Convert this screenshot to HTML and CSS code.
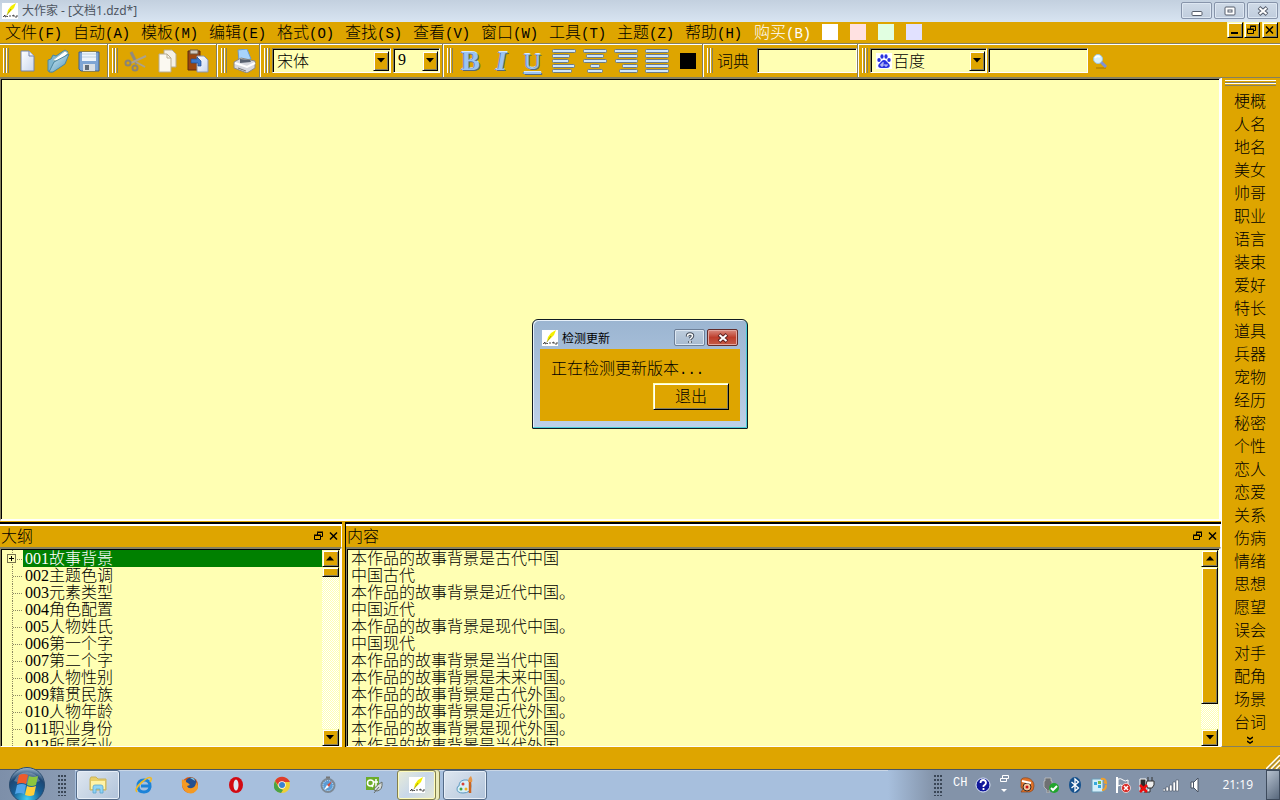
FILE: index.html
```html
<!DOCTYPE html>
<html lang="zh-CN">
<head>
<meta charset="utf-8">
<title>大作家 - [文档1.dzd*]</title>
<link rel="stylesheet" href="styles.css">
</head>
<body>
<svg class="defs" aria-hidden="true">
  <defs>
    <linearGradient id="blue" x1="0" y1="0" x2="0" y2="1"><stop offset="0" stop-color="#e4f2ff"/><stop offset="1" stop-color="#6fa3e0"/></linearGradient>
    <linearGradient id="paper" x1="0" y1="0" x2="1" y2="1"><stop offset="0" stop-color="#fff"/><stop offset="1" stop-color="#c9d6ee"/></linearGradient>
    <linearGradient id="folder" x1="0" y1="0" x2="1" y2="1"><stop offset="0" stop-color="#d9f0f8"/><stop offset="1" stop-color="#4f94b8"/></linearGradient>
    <radialGradient id="orb" cx=".5" cy=".9" r=".9"><stop offset="0" stop-color="#3fd0f5"/><stop offset=".45" stop-color="#175f96"/><stop offset=".75" stop-color="#1d4672"/><stop offset="1" stop-color="#a5bdd3"/></radialGradient>
  </defs>
  <symbol id="pen" viewBox="0 0 16 16"><path fill="#fff" d="M0 0h16v16H0z"/><path fill="#f4ef00" d="M14 0 9 3 6 7 5 11 8 9 12 5z"/><path d="M9 6 5 12" stroke="#8a8600" stroke-width=".7"/><path d="M1 14l2-2v2l2-1 1 1M8 14v-2M10 13l2-1v2M13 14h2v-2" stroke="#222" stroke-width=".8" fill="none"/></symbol>
  <symbol id="bars-left" viewBox="0 0 24 24"><g fill="#cfe6fb" stroke="#6b7c88"><rect x=".5" y=".5" width="23" height="3" rx="1"/><rect x=".5" y="5.500" width="17" height="3" rx="1"/><rect x=".5" y="10.500" width="16" height="3" rx="1"/><rect x=".5" y="15.500" width="22" height="3" rx="1"/><rect x=".5" y="20.500" width="19" height="3" rx="1"/></g></symbol>
  <symbol id="bars-center" viewBox="0 0 24 24"><g fill="#cfe6fb" stroke="#6b7c88"><rect x=".5" y=".5" width="23" height="3" rx="1"/><rect x="3.500" y="5.500" width="17" height="3" rx="1"/><rect x=".5" y="10.500" width="23" height="3" rx="1"/><rect x="7.500" y="15.500" width="9" height="3" rx="1"/><rect x="4.500" y="20.500" width="15" height="3" rx="1"/></g></symbol>
  <symbol id="bars-right" viewBox="0 0 24 24"><g fill="#cfe6fb" stroke="#6b7c88"><rect x=".5" y=".5" width="23" height="3" rx="1"/><rect x="4.500" y="5.500" width="19" height="3" rx="1"/><rect x="1.500" y="10.500" width="22" height="3" rx="1"/><rect x="8.500" y="15.500" width="15" height="3" rx="1"/><rect x="5.500" y="20.500" width="18" height="3" rx="1"/></g></symbol>
  <symbol id="bars-full" viewBox="0 0 24 24"><g fill="#cfe6fb" stroke="#6b7c88"><rect x=".5" y=".5" width="23" height="3" rx="1"/><rect x=".5" y="5.500" width="23" height="3" rx="1"/><rect x=".5" y="10.500" width="23" height="3" rx="1"/><rect x=".5" y="15.500" width="23" height="3" rx="1"/><rect x=".5" y="20.500" width="23" height="3" rx="1"/></g></symbol>
  <symbol id="restore" viewBox="0 0 10 10"><path d="M3.500 4V1.500h5v4H7M3 1h6" fill="none" stroke="currentColor"/><path d="M.5 4.500h6v4h-6zM0 4h7" fill="none" stroke="currentColor"/></symbol>
  <symbol id="cross" viewBox="0 0 10 10"><path d="M1 1.500l7 7M8 1.500l-7 7" stroke="currentColor" stroke-width="1.500"/></symbol>
  <symbol id="up" viewBox="0 0 8 5"><path fill="currentColor" d="M0 4.500h8L4 0z"/></symbol>
  <symbol id="down" viewBox="0 0 8 5"><path fill="currentColor" d="M0 0h8L4 4.500z"/></symbol>
</svg>

<header class="titlebar">
  <svg class="i16"><use href="#pen"/></svg>
  <h1 class="title">大作家 - [文档1.dzd*]</h1>
  <div class="win-buttons">
    <button class="win-btn" aria-label="最小化"><svg width="12" height="12" viewBox="0 0 12 12"><rect x="1" y="6.500" width="10" height="4" rx="1" fill="#fff" stroke="#555d6b"/></svg></button>
    <button class="win-btn" aria-label="还原"><svg width="12" height="12" viewBox="0 0 12 12"><rect x="1" y="2" width="10" height="8" rx="1" fill="#fff" stroke="#555d6b"/><rect x="4" y="5" width="4" height="2" fill="none" stroke="#555d6b"/></svg></button>
    <button class="win-btn" aria-label="关闭"><svg width="12" height="12" viewBox="0 0 12 12"><path d="M2 2.500l8 7M10 2.500l-8 7" stroke="#555d6b" stroke-width="4"/><path d="M2.500 3l7 6M9.500 3l-7 6" stroke="#fff" stroke-width="2"/></svg></button>
  </div>
</header>

<nav class="menubar" aria-label="菜单">
  <button class="menu">文件<span class="key">(F)</span></button>
  <button class="menu">自动<span class="key">(A)</span></button>
  <button class="menu">模板<span class="key">(M)</span></button>
  <button class="menu">编辑<span class="key">(E)</span></button>
  <button class="menu">格式<span class="key">(O)</span></button>
  <button class="menu">查找<span class="key">(S)</span></button>
  <button class="menu">查看<span class="key">(V)</span></button>
  <button class="menu">窗口<span class="key">(W)</span></button>
  <button class="menu">工具<span class="key">(T)</span></button>
  <button class="menu">主题<span class="key">(Z)</span></button>
  <button class="menu">帮助<span class="key">(H)</span></button>
  <button class="menu disabled">购买<span class="key">(B)</span></button>
  <div class="swatches">
    <button class="swatch white" aria-label="白色"></button>
    <button class="swatch pink" aria-label="粉色"></button>
    <button class="swatch green" aria-label="绿色"></button>
    <button class="swatch violet" aria-label="紫色"></button>
  </div>
  <div class="mdi-buttons">
    <button class="raised mdi" aria-label="最小化文档"><svg width="10" height="10"><path d="M1 8h7" stroke="#000" stroke-width="2"/></svg></button>
    <button class="raised mdi" aria-label="还原文档"><svg width="10" height="10"><use href="#restore"/></svg></button>
    <button class="raised mdi mdi-close" aria-label="关闭文档"><svg width="10" height="10"><use href="#cross"/></svg></button>
  </div>
</nav>

<div class="toolbar">
  <div class="group pad">
    <span class="grip"></span>
    <button class="tool" aria-label="新建"><svg class="i24" viewBox="0 0 24 24"><path d="M6 2h8l5 5v15H6z" fill="url(#paper)" stroke="#7483a8"/><path d="M14 2v5h5" fill="#e8eefb" stroke="#7483a8"/></svg></button>
    <button class="tool" aria-label="打开"><svg class="i24" viewBox="0 0 24 24"><path d="M2 11l3-1 2-4 3 1 9-6 3 2-4 11-12 9-4-1z" fill="#7fb6cf" stroke="#4b86a0"/><path d="M7 11 19 2l3 2-9 9z" fill="#fff" stroke="#9bb"/><path d="M3 23 8 13l15-8-4 10-12 8z" fill="url(#folder)" stroke="#4b86a0"/></svg></button>
    <button class="tool" aria-label="保存"><svg class="i24" viewBox="0 0 24 24"><path d="M2 3h20v19H4l-2-2z" fill="#7ea5d4" stroke="#40618f"/><path d="M5 3h14v9H5z" fill="#eef5fb"/><path d="M5 5h14M5 8h14" stroke="#bdd0e0"/><path d="M6 15h12v7H6z" fill="#d9dfe5"/><path d="M8 16h4v5H8z" fill="#606b77"/></svg></button>
  </div>
  <div class="group pad">
    <span class="grip"></span>
    <button class="tool" aria-label="剪切"><svg class="i24" viewBox="0 0 24 24"><path d="M7 3l6 12" stroke="#918a7c" stroke-width="3"/><path d="M22 7 7 14" stroke="#aaa28d" stroke-width="2"/><path d="M12 13l9 5" stroke="#aaa28d" stroke-width="2"/><circle cx="4" cy="14" r="2.500" fill="none" stroke="#898477" stroke-width="2"/><circle cx="11" cy="19" r="2.500" fill="none" stroke="#898477" stroke-width="2"/></svg></button>
    <button class="tool" aria-label="复制"><svg class="i24" viewBox="0 0 24 24"><path d="M9 1h8l4 4v13H9z" fill="#f4f0e6" stroke="#b7ac91"/><path d="M4 5h8l4 4v14H4z" fill="#fbf9f1" stroke="#b7ac91"/><path d="M12 5v4h4" fill="none" stroke="#b7ac91"/></svg></button>
    <button class="tool" aria-label="粘贴"><svg class="i24" viewBox="0 0 24 24"><path d="M2 2h12v19H2z" fill="#9b450f" stroke="#5d2b10"/><path d="M4 1h8v4H4z" fill="#d0c8be" stroke="#6c563f"/><path d="M11 7h7l4 4v12H11z" fill="url(#paper)" stroke="#8b94a8"/><path d="M5 10h6V8l4 4v5h-3v-3H5z" fill="#3d78cb" stroke="#214b91" stroke-width=".7"/></svg></button>
  </div>
  <div class="group">
    <span class="grip"></span>
    <button class="tool" aria-label="打印"><svg class="i24" viewBox="0 0 24 24"><path d="M5 1l9-1 4 10-12 2z" fill="#a8d3fc" stroke="#6a9ace"/><path d="M1 13l7-4 14 3v7l-8 5-13-5z" fill="#d7d9df" stroke="#8b8883"/><path d="M7 10l10 1 1 2-11 1z" fill="#596270"/><path d="M2 14l12 4 8-4" fill="none" stroke="#fff" stroke-width="2"/><path d="M5 19l8 3" stroke="#777"/></svg></button>
  </div>
  <div class="group">
    <span class="grip"></span>
    <div class="combo font-combo"><select aria-label="字体"><option>宋体</option></select><span class="raised arrow"><svg width="8" height="5"><use href="#down"/></svg></span></div>
    <div class="combo size-combo"><select class="digits" aria-label="字号"><option>9</option></select><span class="raised arrow"><svg width="8" height="5"><use href="#down"/></svg></span></div>
  </div>
  <div class="group">
    <span class="grip"></span>
    <button class="tool letter bold" aria-label="加粗">B</button>
    <button class="tool letter italic" aria-label="斜体">I</button>
    <button class="tool letter underline" aria-label="下划线">U</button>
    <button class="tool" aria-label="左对齐"><svg class="i24"><use href="#bars-left"/></svg></button>
    <button class="tool" aria-label="居中"><svg class="i24"><use href="#bars-center"/></svg></button>
    <button class="tool" aria-label="右对齐"><svg class="i24"><use href="#bars-right"/></svg></button>
    <button class="tool" aria-label="两端对齐"><svg class="i24"><use href="#bars-full"/></svg></button>
    <button class="tool" aria-label="文字颜色"><span class="color-box"></span></button>
  </div>
  <div class="group">
    <span class="grip"></span>
    <label class="dict-label" for="dict">词典</label>
    <input class="field" id="dict" type="text">
  </div>
  <div class="group last">
    <span class="grip"></span>
    <div class="combo engine-combo">
      <svg class="i16" viewBox="0 0 16 16"><path fill="#fff" d="M0 0h16v16H0z"/><g fill="#2932df"><ellipse cx="3" cy="7" rx="1.700" ry="2"/><ellipse cx="6" cy="3.500" rx="1.600" ry="2.200"/><ellipse cx="10" cy="3.500" rx="1.600" ry="2.200"/><ellipse cx="13" cy="7" rx="1.700" ry="2"/><path d="M8 7c2 0 3 2 4 3 3 2 2 5-1 5H5c-3 0-4-3-1-5 1-1 2-3 4-3z"/></g><path d="M7 9v4H5v-2h2M9 11v2h2v-2" fill="none" stroke="#fff" stroke-width=".8"/></svg>
      <select aria-label="搜索引擎"><option>百度</option></select><span class="raised arrow"><svg width="8" height="5"><use href="#down"/></svg></span>
    </div>
    <input class="field" type="text" aria-label="搜索内容">
    <button class="search" aria-label="搜索"><svg class="i16" viewBox="0 0 16 16"><path d="M4 15h10" stroke="#b78600" stroke-width="1.500"/><path d="M9 9l5 5" stroke="#7f91d6" stroke-width="3"/><circle cx="6" cy="6" r="4.500" fill="#d5f0ff" stroke="#9cc7e0"/><path d="M3 5q2-3 5-1" stroke="#fff" stroke-width="2" fill="none"/></svg></button>
  </div>
</div>

<main class="workspace">
  <div class="documents">
    <textarea class="editor" aria-label="正文"></textarea>
    <div class="panels">
      <section class="panel outline">
        <header class="panel-head"><h2>大纲</h2><button aria-label="浮动大纲"><svg width="10" height="10"><use href="#restore"/></svg></button><button aria-label="关闭大纲"><svg width="10" height="10"><use href="#cross"/></svg></button></header>
        <div class="panel-body">
          <ul class="tree">
            <li class="selected"><span class="branch"><span class="plus"></span></span><span class="row-text"><span class="digits">001</span>故事背景</span></li>
            <li><span class="branch"></span><span class="row-text"><span class="digits">002</span>主题色调</span></li>
            <li><span class="branch"></span><span class="row-text"><span class="digits">003</span>元素类型</span></li>
            <li><span class="branch"></span><span class="row-text"><span class="digits">004</span>角色配置</span></li>
            <li><span class="branch"></span><span class="row-text"><span class="digits">005</span>人物姓氏</span></li>
            <li><span class="branch"></span><span class="row-text"><span class="digits">006</span>第一个字</span></li>
            <li><span class="branch"></span><span class="row-text"><span class="digits">007</span>第二个字</span></li>
            <li><span class="branch"></span><span class="row-text"><span class="digits">008</span>人物性别</span></li>
            <li><span class="branch"></span><span class="row-text"><span class="digits">009</span>籍贯民族</span></li>
            <li><span class="branch"></span><span class="row-text"><span class="digits">010</span>人物年龄</span></li>
            <li><span class="branch"></span><span class="row-text"><span class="digits">011</span>职业身份</span></li>
            <li><span class="branch"></span><span class="row-text"><span class="digits">012</span>所属行业</span></li>
          </ul>
          <div class="scroll"><button class="raised sbtn" aria-label="大纲上滚"><svg width="8" height="5"><use href="#up"/></svg></button><span class="raised thumb short"></span><button class="raised sbtn end" aria-label="大纲下滚"><svg width="8" height="5"><use href="#down"/></svg></button></div>
        </div>
      </section>
      <section class="panel content">
        <header class="panel-head"><h2>内容</h2><button aria-label="浮动内容"><svg width="10" height="10"><use href="#restore"/></svg></button><button aria-label="关闭内容"><svg width="10" height="10"><use href="#cross"/></svg></button></header>
        <div class="panel-body">
          <ul class="lines">
            <li>本作品的故事背景是古代中国</li>
            <li>中国古代</li>
            <li>本作品的故事背景是近代中国。</li>
            <li>中国近代</li>
            <li>本作品的故事背景是现代中国。</li>
            <li>中国现代</li>
            <li>本作品的故事背景是当代中国</li>
            <li>本作品的故事背景是未来中国。</li>
            <li>本作品的故事背景是古代外国。</li>
            <li>本作品的故事背景是近代外国。</li>
            <li>本作品的故事背景是现代外国。</li>
            <li>本作品的故事背景是当代外国</li>
          </ul>
          <div class="scroll"><button class="raised sbtn" aria-label="内容上滚"><svg width="8" height="5"><use href="#up"/></svg></button><span class="raised thumb long"></span><button class="raised sbtn end" aria-label="内容下滚"><svg width="8" height="5"><use href="#down"/></svg></button></div>
        </div>
      </section>
    </div>
  </div>
  <aside class="sidebar">
    <span class="hgrip"></span>
    <button>梗概</button><button>人名</button><button>地名</button><button>美女</button><button>帅哥</button><button>职业</button><button>语言</button><button>装束</button><button>爱好</button><button>特长</button><button>道具</button><button>兵器</button><button>宠物</button><button>经历</button><button>秘密</button><button>个性</button><button>恋人</button><button>恋爱</button><button>关系</button><button>伤病</button><button>情绪</button><button>思想</button><button>愿望</button><button>误会</button><button>对手</button><button>配角</button><button>场景</button><button>台词</button>
    <button class="more" aria-label="更多"><svg width="6" height="9" viewBox="0 0 6 9"><path d="M0 1l3 2 3-2M0 5l3 2 3-2" fill="none" stroke="#000" stroke-width="1.500"/></svg></button>
  </aside>
</main>

<div class="statusbar"><svg width="14" height="14" viewBox="0 0 14 14"><path d="M0 14 14 0M5 14l9-9M10 14l4-4" stroke="#fff" stroke-width="1.500"/><path d="M2 14 14 2M7 14l7-7M12 14l2-2" stroke="#85806c"/></svg></div>

<footer class="taskbar">
  <div class="start-zone">
    <button class="start" aria-label="开始"><svg width="38" height="38" viewBox="0 0 38 38"><circle cx="19" cy="19" r="17.500" fill="url(#orb)" stroke="#294c70"/><path d="M6 15a14 14 0 0 1 26 0q-13 5-26 0z" fill="#fff" opacity=".25"/><path d="M11 9q5-2 9 0l-2 9q-4-2-9 0z" fill="#ee5b2c"/><path d="M21 10q4 2 9 0l-2 9q-4 2-9 0z" fill="#8dc63f"/><path d="M9 19q5-2 9 0l-2 9q-4-2-9 0z" fill="#51a5ea"/><path d="M19 20q4 2 9 0l-2 9q-4 2-9 0z" fill="#ffcf3a"/></svg></button>
    <span class="dots"></span>
  </div>
  <div class="apps">
    <button class="app open" aria-label="资源管理器"><svg class="i18" viewBox="0 0 18 18"><path d="M1 3l1-2h5l2 2h8v11H1z" fill="#e9cf68" stroke="#c9b35e"/><path d="M2 5h14v8H2z" fill="#fff3a8"/><path d="M4 17v-6q0-2 2-2h6q2 0 2 2v6h-3v-4H7v4z" fill="#8fd4f5" stroke="#5aa6cf" stroke-width=".8"/></svg></button>
    <button class="app" aria-label="Internet Explorer"><svg class="i18" viewBox="0 0 18 18"><path d="M15 11q-1 5-6 5-6 0-6-6t6-6q6 0 6 6H6" fill="none" stroke="#1c83d8" stroke-width="3"/><path d="M2 16Q-1 13 7 6q7-6 9-4 1 1-1 4" fill="none" stroke="#efba28" stroke-width="1.700"/></svg></button>
    <button class="app" aria-label="Firefox"><svg class="i18" viewBox="0 0 18 18"><circle cx="9" cy="9" r="8" fill="#d95b10"/><circle cx="10" cy="7" r="5.500" fill="#254f8f"/><path d="M1 3q1 2 4 1-1 2 2 3l2 2-3 1q1 3 5 2 4-1 4-6 4 6 0 9-5 5-11 0-4-4-3-12z" fill="#f49a23"/><path d="M9 2q4-1 5 3-3-2-5-3z" fill="#84c9e4"/></svg></button>
    <button class="app" aria-label="Opera"><svg class="i18" viewBox="0 0 18 18"><ellipse cx="9" cy="9" rx="7" ry="8" fill="#d20a13"/><ellipse cx="9" cy="9" rx="2.500" ry="5.500" fill="#dce7f4"/></svg></button>
    <button class="app" aria-label="Chrome"><svg class="i18" viewBox="0 0 18 18"><circle cx="9" cy="9" r="8" fill="#efcf35"/><path d="M2 5q3-5 9-4 4 1 6 5H9L6 10z" fill="#df3d2c"/><path d="M2 5l4 7 4 2-2 3Q0 16 1 8z" fill="#4ba344"/><circle cx="9" cy="9" r="3.700" fill="#fff"/><circle cx="9" cy="9" r="3" fill="#3c83d1"/></svg></button>
    <button class="app" aria-label="Safari"><svg class="i18" viewBox="0 0 18 18"><circle cx="9" cy="9.500" r="6.500" fill="#5b9cd6" stroke="#7d8995" stroke-width="2"/><circle cx="9" cy="9.500" r="5" fill="none" stroke="#d3e6f5" stroke-dasharray="1 1"/><path d="M13 5l-3 6-2-2z" fill="#e04a36"/><path d="M5 14l3-5 2 2z" fill="#fff"/><path d="M7 1.500h4" stroke="#777" stroke-width="2"/></svg></button>
    <button class="app" aria-label="Qt"><svg class="i18" viewBox="0 0 18 18"><path fill="#6dad28" d="M1 1h13v13H1z"/><circle cx="5.500" cy="7" r="3" fill="none" stroke="#fff" stroke-width="1.500"/><path d="M6 9l2 2M11 3v7h2M9 6h4" stroke="#fff" stroke-width="1.500" fill="none"/><path d="M17 6q1 8-5 9l-3-1q0-3 8-8z" fill="#d6dcda" stroke="#69706b"/><path d="M9 17l5-6" stroke="#69706b"/></svg></button>
    <button class="app active" aria-label="大作家"><svg class="i16"><use href="#pen"/></svg></button>
    <button class="app open" aria-label="画图"><svg class="i18" viewBox="0 0 18 18"><path d="M8 4q7-1 7 6 0 7-8 7-6 0-6-4 0-3 2-3 0-5 5-6z" fill="#d9effa" stroke="#5e9ac0"/><circle cx="5" cy="13" r="1.500" fill="#45a441"/><circle cx="7" cy="8" r="1.500" fill="#d64237"/><circle cx="10" cy="13" r="1.500" fill="#efb62b"/><path d="M14 6v11" stroke="#cd6420" stroke-width="2.500"/><path d="M12 6q0-4 3-6 2 4 1 6z" fill="#e69749"/></svg></button>
  </div>
  <div class="tray">
    <span class="dots"></span>
    <span class="ime">CH</span>
    <svg class="i16" viewBox="0 0 16 16"><circle cx="8" cy="8" r="7" fill="#10179b" stroke="#dbe6f6"/><path d="M5.500 6q0-3 2.700-3T11 6q0 1-2.500 3v1M8.500 11v2" fill="none" stroke="#fff" stroke-width="1.800"/></svg>
    <svg class="i16 lang-bar" viewBox="0 0 16 24"><path d="M7.500 5V2.500h6v3H11M5.500 5.500h6v3h-6z" fill="none" stroke="#fff"/><path d="M6 16h6l-3 3z" fill="#fff"/></svg>
    <svg class="i16" viewBox="0 0 16 16"><path d="M2 3q1-3 7-2 6 2 6 8 0 5-4 6H2l2-3q-3-1-2-4z" fill="#e07127" stroke="#7c3a16" stroke-width=".6"/><circle cx="8" cy="10" r="4" fill="#f1c69c" stroke="#3c2a20"/><circle cx="8" cy="10" r="1.500" fill="#c11"/><path d="M3 4l9 2" stroke="#fff" stroke-width="2"/></svg>
    <svg class="i16" viewBox="0 0 16 16"><path d="M2 1h6v3h1v6l-3 3v3H4v-3l-3-3V4h1z" fill="#6e7072" stroke="#ccc" stroke-width=".7"/><circle cx="11" cy="11" r="5" fill="#22a52d"/><path d="M8 11l2 2 4-4" fill="none" stroke="#fff" stroke-width="2"/></svg>
    <svg class="i16" viewBox="0 0 16 16"><ellipse cx="8" cy="8" rx="6" ry="8" fill="#15518d"/><path d="M4.500 5l7 6L8 14V2l3.500 3-7 6" fill="none" stroke="#fff" stroke-width="1.300"/></svg>
    <svg class="i16" viewBox="0 0 16 16"><path d="M1 2h11v13H1z" fill="#d2eefa" stroke="#6b9db8"/><path d="M3 5h3v3H3zM7 8h3v3H7z" fill="#36a9dc"/><path d="M7 4h3v3H7z" fill="#7fba42"/><path d="M10 2q5-1 5 4l-2-1M15 8q0 5-4 5" fill="none" stroke="#efa02c" stroke-width="2"/></svg>
    <svg class="i16" viewBox="0 0 16 16"><path d="M2 0v16" stroke="#fff" stroke-width="2"/><path d="M3 2q3-1 5 1t5 0v7q-3 1-5-1t-5 0z" fill="#8796aa" stroke="#fff"/><circle cx="11" cy="11" r="4.500" fill="#d72620" stroke="#fff" stroke-width=".7"/><path d="M9 9l4 4M13 9l-4 4" stroke="#fff" stroke-width="1.500"/></svg>
    <svg class="i16" viewBox="0 0 16 16"><path d="M1 2h6v12H1z" fill="#2b2b2b" stroke="#fff"/><path d="M8 4h7v4l-2 3H9L7 8zM9 4V0M13 4V0M11 11v4H5" fill="#eee" stroke="#333"/><path d="M1 8l7 7M8 8l-7 7" stroke="#ee0d0d" stroke-width="2.500"/></svg>
    <svg class="i16" viewBox="0 0 16 16"><g fill="#fff" stroke="#4b5564" stroke-width=".6"><path d="M0 12h2.500v2H0zM3 10h2.500v4H3zM6.500 8H9v6H6.500zM10 5h2.500v9H10zM13 3h2.500v11H13z"/></g></svg>
    <svg class="i16" viewBox="0 0 16 16"><path d="M4 5h3l4-4v14l-4-4H4z" fill="#fff" stroke="#4b5564"/><path d="M6.500 5v6" stroke="#4b5564"/></svg>
    <time class="clock">21:19</time>
    <button class="show-desktop" aria-label="显示桌面"></button>
  </div>
</footer>

<section class="dialog" role="dialog" aria-labelledby="dialog-title">
  <header class="dialog-head">
    <svg class="i16"><use href="#pen"/></svg>
    <h2 id="dialog-title">检测更新</h2>
    <button class="win-btn help" aria-label="帮助"><svg width="12" height="12" viewBox="0 0 12 12"><g fill="none"><path d="M3.500 4.500q0-2.500 2.500-2.500t2.500 2q0 1-2.500 3M6 9v2" stroke="#444d5b" stroke-width="3.500"/><path d="M3.500 4.500q0-2.500 2.500-2.500t2.500 2q0 1-2.500 3M6 9v2" stroke="#fff" stroke-width="1.500"/></g></svg></button>
    <button class="win-btn close" aria-label="关闭"><svg width="12" height="12" viewBox="0 0 12 12"><path d="M2 2.500l8 7M10 2.500l-8 7" stroke="#5e2020" stroke-width="4"/><path d="M2.500 3l7 6M9.500 3l-7 6" stroke="#fff" stroke-width="2"/></svg></button>
  </header>
  <div class="dialog-body">
    <p>正在检测更新版本<span class="key">...</span></p>
    <button class="raised exit">退出</button>
  </div>
</section>
</body>
</html>
```
FILE: styles.css
```css
:root {
  --gold: #dea500;
  --cream: #ffffb3;
  --shade: #858060;
}

* { box-sizing: border-box; }

body {
  margin: 0;
  height: 100vh;
  min-height: 600px;
  display: flex;
  flex-direction: column;
  overflow: hidden;
  background: var(--gold);
  color: #000;
  font: 300 16px/17px "Noto Sans CJK SC", sans-serif;
}

button, input, select, textarea {
  margin: 0;
  padding: 0;
  border: 0;
  border-radius: 0;
  background: none;
  color: inherit;
  font: inherit;
}

h1, h2, p, ul { margin: 0; padding: 0; font: inherit; list-style: none; }
svg { display: block; flex: none; }
.defs { position: absolute; width: 0; height: 0; }
.i16 { width: 16px; height: 16px; }
.i18 { width: 18px; height: 18px; }
.i24 { width: 24px; height: 24px; }
.key { font-family: "Liberation Mono", monospace; font-size: 14px; }
.digits { font-family: "Liberation Serif", serif; font-size: 16px; }

.raised {
  display: flex;
  align-items: center;
  justify-content: center;
  background: var(--gold);
  border: 1px solid;
  border-color: var(--cream) #000 #000 var(--cream);
  box-shadow: inset 1px 1px #fff, inset -1px -1px var(--shade);
}

/* Window title */
.titlebar {
  flex: none;
  height: 22px;
  padding: 0 2px;
  display: flex;
  align-items: center;
  gap: 4px;
  background: linear-gradient(#c3d0df, #d8e4f1);
}
.title { flex: 1; color: #4d5561; font: 12px/20px "Noto Sans", "Noto Sans CJK SC", sans-serif; }
.win-buttons { display: flex; gap: 2px; align-self: flex-start; padding-top: 2px; }
.win-btn {
  width: 31px;
  height: 17px;
  display: flex;
  align-items: center;
  justify-content: center;
  border: 1px solid #8794aa;
  border-radius: 2px;
  background: linear-gradient(#cfdae7, #c0cddd);
  box-shadow: inset 0 0 0 1px #dde7f2;
}

/* Menus */
.menubar { flex: none; height: 21px; display: flex; padding-right: 2px; }
.menu { width: 68px; white-space: nowrap; text-align: left; padding-left: 5px; }
.menu.disabled { color: #fff; padding-left: 6px; }
.swatches { display: flex; gap: 12px; padding: 2px 0 3px 6px; flex: 1; }
.swatch { width: 16px; height: 16px; }
.white { background: #fff; }
.pink { background: #ffe1e1; }
.green { background: #e1ffe1; }
.violet { background: #e1e1ff; }
.mdi-buttons { display: flex; gap: 1px; }
.mdi { width: 16px; height: 16px; }
.mdi-close { margin-left: 1px; }

/* Toolbar */
.toolbar {
  flex: none;
  height: 35px;
  display: flex;
  border-top: 1px solid var(--shade);
  border-bottom: 1px solid var(--shade);
  box-shadow: inset 0 1px #fff;
}
.group {
  display: flex;
  align-items: center;
  padding-left: 3px;
  border-right: 1px solid #fff;
  box-shadow: inset -1px 0 var(--shade);
}
.group.pad { padding-right: 4px; }
.group.last { flex: 1; border: 0; box-shadow: none; }
.grip {
  width: 6px;
  height: 25px;
  margin-right: 2px;
  background: linear-gradient(90deg, #fff 0 1px, var(--gold) 1px 2px, var(--shade) 2px 3px, #fff 3px 4px, var(--gold) 4px 5px, var(--shade) 5px);
}
.tool { width: 31px; height: 28px; display: flex; align-items: center; justify-content: center; }
.letter {
  color: #9cc4f2;
  font: 700 28px/28px "Liberation Serif", serif;
  text-shadow: 1px 1px #56687d, -1px 0 #6485ae, 0 -1px #d7eaff;
}
.italic { font-style: italic; }
.underline { font-size: 24px; font-weight: 400; text-decoration: underline; text-decoration-thickness: 2px; text-underline-offset: 3px; }
.color-box { width: 16px; height: 16px; background: #000; }
.combo, .field, .editor, .panel-body {
  background: var(--cream);
  border: 1px solid;
  border-color: var(--shade) #fff #fff var(--shade);
  box-shadow: inset 1px 1px #000;
}
.combo { height: 25px; display: flex; align-items: center; padding: 1px 1px 1px 3px; margin-right: 1px; }
.combo select { flex: 1; min-width: 0; height: 21px; appearance: none; padding-left: 1px; line-height: 20px; padding-bottom: 1px; }
.arrow { width: 16px; height: 20px; flex: none; }
.font-combo { width: 119px; margin-right: 2px; }
.size-combo { width: 47px; margin-right: 3px; }
.engine-combo { width: 117px; padding-left: 5px; }
.field { width: 100px; height: 25px; padding: 0 4px; margin-right: 1px; }
.dict-label { padding: 0 8px 0 2px; }
.search { padding-left: 3px; }

/* Documents and docked panels */
.workspace { flex: 1; min-height: 0; display: flex; }
.documents { flex: 1; min-width: 0; display: flex; flex-direction: column; }
.editor { flex: 1; min-height: 0; resize: none; outline: 0; padding: 4px; border-width: 1px 2px 2px 1px; }
.panels {
  flex: none;
  height: 226px;
  display: flex;
  gap: 3px;
  padding-top: 1px;
}
.panel { display: flex; flex-direction: column; border-top: 2px solid #000; min-width: 0; }
.outline { width: 28%; max-width: 343px; }
.content { flex: 1; border-left: 1px solid #000; }
.panel-head {
  flex: none;
  height: 24px;
  display: flex;
  align-items: center;
  gap: 5px;
  padding: 0 2px 2px 1px;
  border-top: 2px solid #fff;
  border-right: 1px solid #fff;
  border-bottom: 1px solid var(--shade);
}
.panel-head h2 { flex: 1; }
.panel-body { flex: 1; min-height: 0; display: flex; padding: 1px 1px 0; border-right-width: 2px; }
.tree, .lines { flex: 1; overflow: hidden; white-space: nowrap; line-height: 15px; }
.tree li { height: 17px; display: flex; }
.branch {
  width: 21px;
  flex: none;
  padding-left: 5px;
  background:
    repeating-linear-gradient(90deg, #8c8860 0 1px, transparent 1px 2px) 11px 9px / 10px 1px no-repeat,
    repeating-linear-gradient(#8c8860 0 1px, transparent 1px 2px) 10px 0 / 1px 17px no-repeat;
}
.plus {
  display: block;
  width: 9px;
  height: 9px;
  margin-top: 4px;
  border: 1px solid #77734e;
  background:
    linear-gradient(#000, #000) center / 5px 1px no-repeat,
    linear-gradient(#000, #000) center / 1px 5px no-repeat,
    var(--cream);
}
.row-text { flex: 1; padding-left: 2px; }
.selected .row-text { background: #008000; color: #fff; }
.lines { padding-left: 3px; }
.lines li { height: 17px; }
.scroll {
  flex: none;
  width: 17px;
  display: flex;
  flex-direction: column;
  background: conic-gradient(#fff 25%, var(--cream) 0 50%, #fff 0 75%, var(--cream) 0) 0 0 / 2px 2px;
}
.sbtn { height: 17px; flex: none; }
.end { margin-top: auto; }
.thumb { flex: none; }
.short { height: 10px; }
.long { height: 137px; }

.sidebar {
  flex: none;
  width: 59px;
  display: flex;
  flex-direction: column;
  overflow: hidden;
  padding: 2px 1px 0 2px;
  border-left: 1px solid #fff;
  border-bottom: 1px solid var(--shade);
}
.sidebar button { height: 23px; flex: none; padding-right: 3px; }
.hgrip {
  flex: none;
  height: 6px;
  margin: 0 3px 3px 1px;
  background: linear-gradient(#fff 0 1px, var(--gold) 1px 2px, var(--shade) 2px 3px, #fff 3px 4px, var(--gold) 4px 5px, var(--shade) 5px);
}
.sidebar .more { height: 14px; display: flex; justify-content: center; align-items: center; }

.statusbar { flex: none; height: 22px; display: flex; justify-content: flex-end; align-items: flex-end; }

/* Desktop taskbar */
.taskbar {
  flex: none;
  height: 31px;
  display: flex;
  border-top: 1px solid #4a5562;
  box-shadow: inset 0 1px #c9d6e6;
  background: #a7bfdd;
}
.start-zone {
  width: 75px;
  display: flex;
  align-items: center;
  gap: 12px;
  padding-left: 8px;
  background: linear-gradient(90deg, #7d8fa9, #8c9db5);
}
.start { width: 38px; height: 38px; margin-bottom: 1px; }
.dots {
  width: 9px;
  height: 21px;
  flex: none;
  background:
    linear-gradient(#3f4b5b, #3f4b5b) 0 0 / 1px 1px,
    radial-gradient(circle at 1px 1px, #3f4b5b 0 1px, transparent 1px) 0 0 / 3px 4px;
  background: radial-gradient(circle at 1px 1px, #3a4656 0 1px, transparent 1px) 0 0 / 3px 4px;
}
.apps { display: flex; flex: 1; }
.app { width: 46px; display: flex; justify-content: center; align-items: center; border: 1px solid transparent; }
.app.open {
  border-color: #546b88;
  border-radius: 3px;
  width: 44px;
  margin: 0 1px;
  background: linear-gradient(135deg, #dfe7f0, #b0c3da);
  box-shadow: inset 0 0 0 1px #e7eff8;
}
.app.active {
  width: 39px;
  margin-right: 6px;
  border-color: #827f4d;
  border-radius: 3px;
  background: linear-gradient(135deg, #e9edd8, #c9d8ea 50%, #e4e8d4);
  box-shadow: inset 0 0 0 1px #fffdbb, 3px 0 #ebecba, 4px 0 #827f4d;
}
.tray {
  display: flex;
  align-items: center;
  gap: 8px;
  padding-left: 46px;
  background: linear-gradient(90deg, #a7bfdd, #8393a9 46px);
}
.ime { color: #fff; font: 12px/14px "Liberation Mono", monospace; padding: 0 0 4px 2px; }
.lang-bar { height: 24px; margin-left: -4px; }
.clock { color: #fff; font: 12px/16px "Open Sans", sans-serif; padding: 0 5px 0 11px; }
.show-desktop {
  align-self: stretch;
  width: 14px;
  border: 1px solid #3e4b5d;
  background: linear-gradient(135deg, #b5c0ce, #58687d);
}

/* Update dialog floats over the workspace */
.dialog {
  position: absolute;
  top: 319px;
  left: calc(50% - 108px);
  width: 216px;
  padding: 1px 7px 7px;
  border: 1px solid #111b22;
  border-radius: 6px 6px 1px 1px;
  background: linear-gradient(#9bb5d1, #bdd0e8);
  box-shadow: inset -1px -1px #49cbd6, inset 1px 1px #e6f0fa;
}
.dialog-head { height: 28px; display: flex; align-items: center; gap: 2px; padding: 5px 2px 0; }
.dialog-head h2 { flex: 1; padding-left: 2px; font-size: 12px; font-weight: 400; }
.help { background: linear-gradient(#bdcddd, #a7bad0); border-color: #6d7f98; }
.close { background: linear-gradient(#d98b80, #bd3d2b 50%, #c55c47); border-color: #622c2b; box-shadow: inset 0 0 0 1px #e3a69e; }
.dialog-body { background: var(--gold); padding: 10px 11px 11px; display: flex; flex-direction: column; gap: 6px; }
.dialog-body p { height: 18px; }
.exit { align-self: flex-end; width: 76px; height: 27px; line-height: 15px; padding-bottom: 2px; }
```
